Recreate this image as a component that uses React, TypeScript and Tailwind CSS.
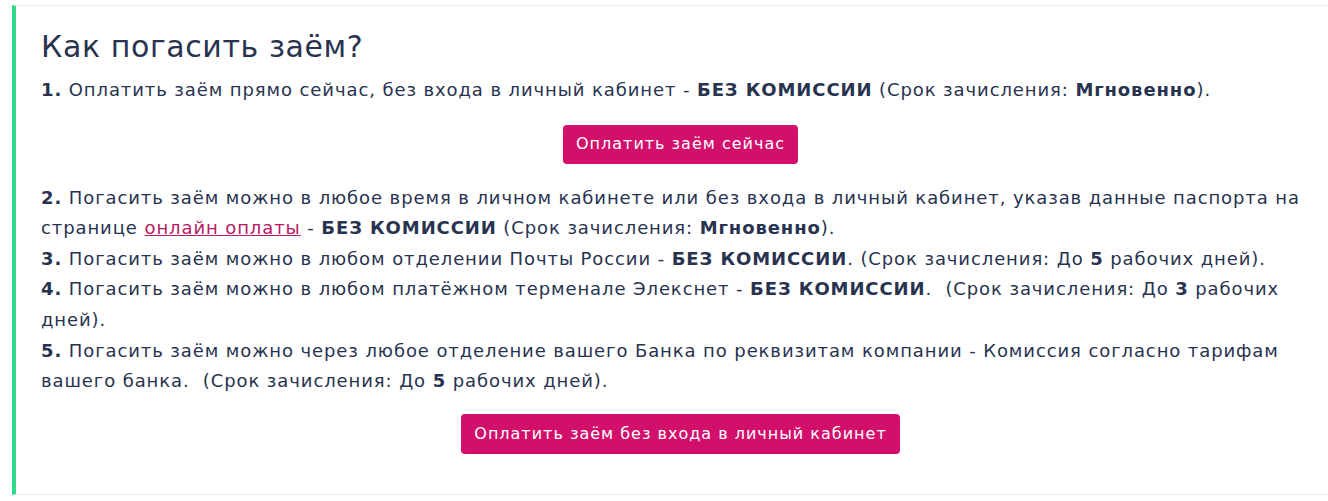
import React from "react";

export default function App() {
  return (
    <div className="min-h-[501px] bg-white pt-[5px] pl-[12px]" style={{ fontFamily: '"DejaVu Sans", sans-serif' }}>
      <div className="border-t border-b border-[#ececec] border-l-4 border-l-[#31d98a] pl-[25px] pr-[8px] pt-[24px] pb-[40px] text-[#283350] text-[18px] tracking-[0.9px] leading-[30.6px]">
        <h2 className="text-[30px] tracking-[0.6px] leading-[34px] mb-[11px] font-normal">Как погасить заём?</h2>
        <p>
          <b>1.</b> Оплатить заём прямо сейчас, без входа в личный кабинет - <b>БЕЗ КОМИССИИ</b> (Срок зачисления: <b>Мгновенно</b>).
        </p>
        <div className="flex justify-center my-[19px]">
          <button className="bg-[#d20f6b] text-white text-[16px] tracking-[1px] leading-[20px] rounded-[4px] h-[39px] px-[13px]">Оплатить заём сейчас</button>
        </div>
        <p>
          <b>2.</b> Погасить заём можно в любое время в личном кабинете или без входа в личный кабинет, указав данные паспорта на странице{" "}
          <a className="text-[#b81a63] underline">онлайн оплаты</a> - <b>БЕЗ КОМИССИИ</b> (Срок зачисления: <b>Мгновенно</b>).
          <br />
          <b>3.</b> Погасить заём можно в любом отделении Почты России - <b>БЕЗ КОМИССИИ</b>. (Срок зачисления: До <b>5</b> рабочих дней).
          <br />
          <b>4.</b> Погасить заём можно в любом платёжном терменале Элекснет - <b>БЕЗ КОМИССИИ</b>.&nbsp; (Срок зачисления: До <b>3</b> рабочих дней).
          <br />
          <b>5.</b> Погасить заём можно через любое отделение вашего Банка по реквизитам компании - Комиссия согласно тарифам вашего банка.&nbsp; (Срок зачисления: До <b>5</b> рабочих дней).
        </p>
        <div className="flex justify-center mt-[17px]">
          <button className="bg-[#d20f6b] text-white text-[16px] tracking-[1px] leading-[20px] rounded-[4px] h-[40px] px-[13px]">Оплатить заём без входа в личный кабинет</button>
        </div>
      </div>
    </div>
  );
}
